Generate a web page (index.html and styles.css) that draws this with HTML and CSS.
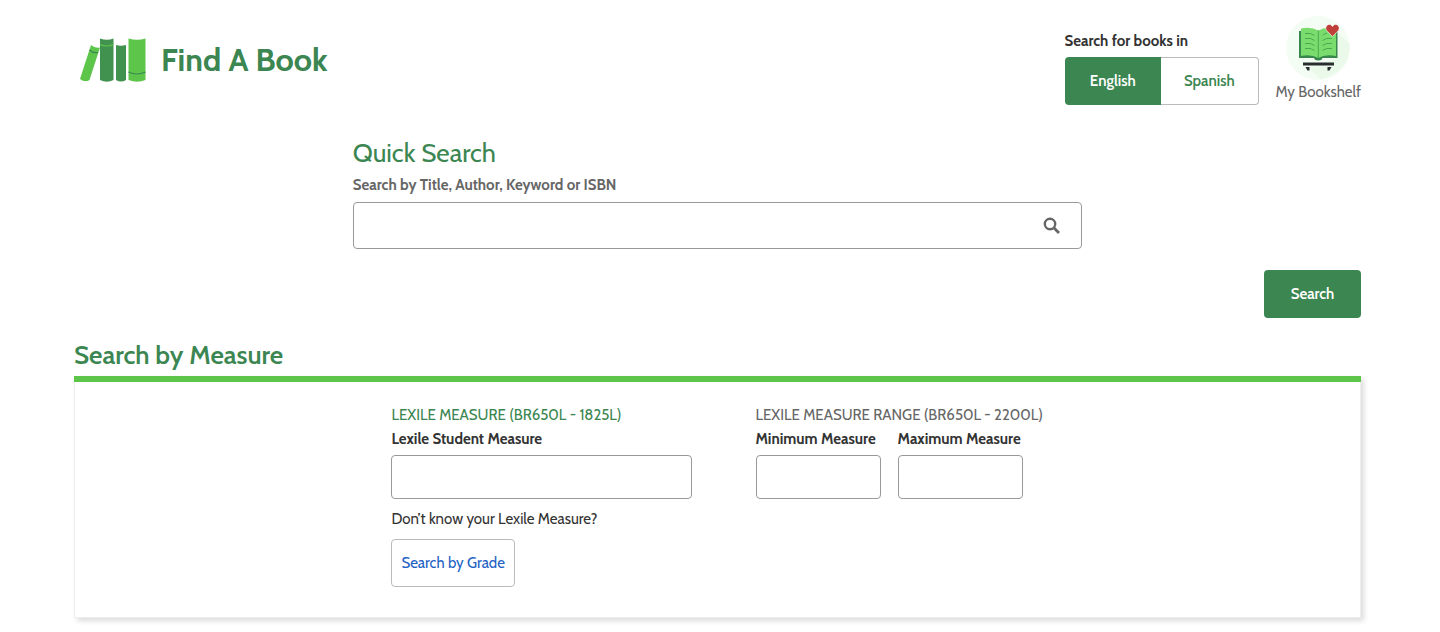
FILE: index.html
```html
<!DOCTYPE html>
<html lang="en">
<head>
<meta charset="utf-8">
<meta name="viewport" content="width=device-width, initial-scale=1">
<title>Find A Book</title>
<link rel="stylesheet" href="styles.css">
</head>
<body>
<div class="page">
  <header class="header">
    <a class="brand" href="#">
      <svg class="brand-logo" width="66" height="44" viewBox="0 0 66 44" aria-hidden="true">
        <path fill="#5ec54b" d="M11 7Q15 10.500 20 9.500L9.500 42Q5 45 0 41Z"/>
        <path fill="none" stroke="#3b8651" stroke-width="1.200" d="M9.500 12Q13 15.500 18 14.500"/>
        <path fill="#41914f" d="M20 .5Q27 3 33.500 .5V42Q27 45.500 20 42Z"/>
        <path fill="none" stroke="#5ec54b" stroke-width="1.200" d="M20 6.500Q27 9.500 33.500 6.500"/>
        <path fill="#41914f" d="M36 7Q41 8.500 46 7V42Q41 45 36 42Z"/>
        <path fill="#5ec54b" d="M48.500 .5Q57 3 65.500 .5V42Q57 45.500 48.500 42Z"/>
        <path fill="none" stroke="#3b8651" stroke-width="1.200" d="M48.500 34Q57 38 65.500 34"/>
      </svg>
      <span class="brand-name">Find A Book</span>
    </a>
    <div class="header-tools">
      <div class="language" role="group" aria-labelledby="language-label">
        <div class="language-label" id="language-label">Search for books in</div>
        <div class="toggle">
          <button class="toggle-button toggle-active" type="button" aria-pressed="true">English</button>
          <button class="toggle-button" type="button" aria-pressed="false">Spanish</button>
        </div>
      </div>
      <a class="bookshelf" href="#">
        <svg width="66" height="66" viewBox="0 0 66 66" aria-hidden="true">
          <circle cx="33" cy="34" r="32" fill="#f4fdf3"/>
          <path fill="#eaf9e9" d="M53 19L64.500 30Q66 56 36 65.500L24 54L50 45Z"/>
          <path fill="#38874d" d="M14 17H52.500V44H37.500Q37 46.500 33.300 46.500T29 44H14Z"/>
          <path fill="#79dc6c" d="M16 14.500Q26 12.500 33.300 16.500Q40 12.500 51 14.500V42Q40 40 33.300 44Q26 40 16 42Z"/>
          <path fill="none" stroke="#45a34d" stroke-width=".9" d="M33.300 16.500V44M20 19.500Q26 18.500 29.500 21.500M20 24.500Q26 23.500 29.500 26.500M20 29.500Q26 28.500 29.500 31.500M20 34.500Q26 33.500 29.500 36.500M47 24.500Q41 23.500 37.500 26.500M47 29.500Q41 28.500 37.500 31.500M47 34.500Q41 33.500 37.500 36.500M42 19.200Q39 19.500 37.500 21.500"/>
          <path fill="#292d2f" d="M18 48.500H49V51.500H18ZM20.500 53H24.500V56.500H22.500ZM42.500 53H46.500L44.500 56.500H42.500Z"/>
          <path fill="#bf4038" stroke="#fff" stroke-width=".6" d="M47.500 22.500L41.800 16.700C38.500 12.500 44.500 7.500 47.500 12.500C50.500 7.500 56.500 12.500 53.200 16.700Z"/>
        </svg>
        <span>My Bookshelf</span>
      </a>
    </div>
  </header>
  <main>
    <form class="search-form">
      <section class="quick-search">
        <h2 class="quick-title">Quick Search</h2>
        <label class="quick-label" for="query">Search by Title, Author, Keyword or ISBN</label>
        <div class="quick-field">
          <input class="quick-input" id="query" type="text">
          <button class="quick-icon" type="button" aria-label="Search books">
            <svg width="18" height="18" viewBox="0 0 18 18" aria-hidden="true">
              <circle cx="7" cy="7" r="5.200" fill="none" stroke="#666" stroke-width="2.400"/>
              <path fill="none" stroke="#666" stroke-width="2.800" d="M10.800 10.800L16 16"/>
            </svg>
          </button>
        </div>
      </section>
      <div class="actions">
        <button class="search-button" type="submit">Search</button>
      </div>
      <h2 class="measure-title">Search by Measure</h2>
      <section class="panel">
        <div class="panel-grid">
          <div class="panel-column">
            <h3 class="panel-heading panel-heading-active">LEXILE MEASURE (BR650L - 1825L)</h3>
            <div class="field">
              <label class="field-label" for="student">Lexile Student Measure</label>
              <input class="field-input" id="student" type="text">
            </div>
            <p class="hint">Don’t know your Lexile Measure?</p>
            <button class="grade-button" type="button">Search by Grade</button>
          </div>
          <div class="panel-column">
            <h3 class="panel-heading">LEXILE MEASURE RANGE (BR650L - 2200L)</h3>
            <div class="range">
              <div class="field">
                <label class="field-label" for="minimum">Minimum Measure</label>
                <input class="field-input" id="minimum" type="text">
              </div>
              <div class="field">
                <label class="field-label" for="maximum">Maximum Measure</label>
                <input class="field-input" id="maximum" type="text">
              </div>
            </div>
          </div>
        </div>
      </section>
    </form>
  </main>
</div>
</body>
</html>
```
FILE: styles.css
```css
* {
  box-sizing: border-box;
}

body {
  margin: 0;
  background: #fff;
  color: #333;
  font-family: Cabin, Lato, sans-serif;
  font-size: 15px;
  line-height: 24px;
}

h2,
h3,
p {
  margin: 0;
}

a {
  color: inherit;
  text-decoration: none;
}

button,
input {
  font: inherit;
}

button {
  cursor: pointer;
}

svg {
  display: block;
}

.page {
  padding: 14px 79px 14px 74px;
}

.header {
  display: flex;
  justify-content: space-between;
  align-items: flex-start;
}

.brand {
  display: flex;
  align-items: center;
  gap: 15px;
  padding: 24px 0 0 6px;
  color: #3b8651;
}

.brand-name {
  font-size: 32px;
  font-weight: 700;
  line-height: 44px;
}

.header-tools {
  display: flex;
  gap: 17px;
}

.language {
  padding-top: 15px;
}

.language-label {
  font-weight: 700;
  line-height: 24px;
  margin-bottom: 4px;
}

.toggle {
  display: flex;
  width: 194px;
  height: 48px;
}

.toggle-button {
  flex: 1;
  padding: 0;
  border: 1px solid #bbb;
  border-left: 0;
  border-radius: 0 4px 4px 0;
  background: #fff;
  color: #3b8651;
  font-weight: 600;
}

.toggle-active {
  border: 0;
  border-radius: 4px 0 0 4px;
  background: #3b8651;
  color: #fff;
}

.bookshelf {
  display: flex;
  flex-direction: column;
  align-items: center;
  color: #666;
}

.quick-search {
  width: calc(100% * 17 / 30);
  margin: 0 auto;
  padding-top: 30px;
}

.quick-title {
  color: #3b8651;
  font-size: 26px;
  font-weight: 400;
  line-height: 36px;
}

.quick-label {
  display: block;
  margin: 2px 0 5px;
  color: #666;
  font-weight: 700;
}

.quick-field {
  display: flex;
  height: 47px;
  border: 1px solid #999;
  border-radius: 4px;
}

.quick-input {
  flex: 1;
  min-width: 0;
  padding: 0 12px;
  border: 0;
  background: none;
}

.quick-icon {
  padding: 0 20px;
  border: 0;
  background: none;
}

.actions {
  display: flex;
  justify-content: flex-end;
  margin-top: 21px;
}

.search-button {
  width: 97px;
  height: 48px;
  padding: 0;
  border: 0;
  border-radius: 4px;
  background: #3b8651;
  color: #fff;
  font-weight: 600;
}

.measure-title {
  margin-top: 19px;
  padding-bottom: 3px;
  color: #3b8651;
  font-size: 26px;
  font-weight: 600;
  line-height: 36px;
}

.panel {
  padding: 21px 0 30px;
  border: 1px solid #eee;
  border-top: 0;
  box-shadow: 3px 3px 5px #ddd;
}

.panel::before {
  content: "";
  display: block;
  height: 6px;
  margin: -21px -1px 21px;
  background: #5ec54b;
}

.panel-grid {
  display: grid;
  grid-template-columns: 1fr 1fr;
  width: calc(100% * 17 / 30);
  margin: 0 auto;
}

.panel-column {
  padding: 0 26px 0 38px;
}

.panel-heading {
  color: #666;
  font-size: 15px;
  font-weight: 400;
  white-space: nowrap;
}

.panel-heading-active {
  color: #3b8651;
}

.range {
  display: grid;
  grid-template-columns: 125px 125px;
  gap: 17px;
}

.field-label {
  display: block;
  margin-bottom: 4px;
  font-weight: 700;
  white-space: nowrap;
}

.field-input {
  display: block;
  width: 100%;
  height: 44px;
  padding: 0 12px;
  border: 1px solid #999;
  border-radius: 4px;
  background: #fff;
}

.hint {
  margin: 8px 0;
}

.grade-button {
  height: 48px;
  padding: 0 9px;
  border: 1px solid #bbb;
  border-radius: 4px;
  background: #fff;
  color: #2161c4;
}
```
